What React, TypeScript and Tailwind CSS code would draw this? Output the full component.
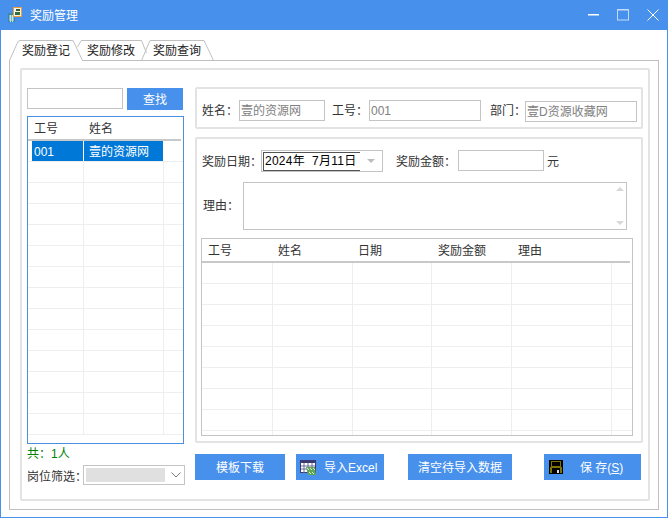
import React from "react";

const Field = ({ w, text, className = "" }: { w: string; text?: string; className?: string }) => (
  <div className={`${w} h-[21px] border border-[#c4c4c4] bg-white flex items-center pl-[1px] pt-[1px] text-[#808080] whitespace-nowrap ${className}`}>{text}</div>
);

const Label = ({ w, text, className = "" }: { w: string; text: string; className?: string }) => (
  <div className={`${w} h-[21px] flex items-center pt-[1px] text-[#333333] shrink-0 whitespace-nowrap ${className}`}>{text}</div>
);

function TitleIcon() {
  return (
    <svg width="16" height="16" viewBox="0 0 16 16" className="shrink-0">
      <rect x="0" y="6" width="7" height="9" fill="#3d8a9e" />
      <path d="M1 9h5M1 11h5M1 13h5M2.500 8v7M4.500 8v7" stroke="#bfe3ea" strokeWidth="1" />
      <rect x="5.500" y="0.500" width="8" height="9" fill="#f4f4ea" stroke="#f09a3e" />
      <rect x="8" y="2" width="4" height="2" fill="#3a5a3a" />
      <rect x="7" y="5" width="5" height="3" fill="#30703c" />
    </svg>
  );
}

function ExcelIcon() {
  return (
    <svg width="17" height="15" viewBox="0 0 17 15" className="shrink-0">
      <rect x="0.500" y="0.500" width="15" height="12" fill="#ffffff" stroke="#3b3b73" />
      <rect x="1" y="1" width="14" height="2" fill="#3b3b73" />
      <path d="M1 6h14M1 9h14M4 3v10M8 3v10M12 3v10" stroke="#6a6a9a" strokeWidth="1" />
      <path d="M6 7h9l1 8H8z" fill="#5fa55a" />
      <path d="M7 8l2 2M10 8l2 2M13 8l2 2M9 12l2 2M12 12l2 2" stroke="#d6ecd0" strokeWidth="1" />
    </svg>
  );
}

function SaveIcon() {
  return (
    <svg width="14" height="14" viewBox="0 0 14 14" className="shrink-0">
      <rect width="14" height="14" fill="#000000" />
      <rect x="2" y="1" width="10" height="6" fill="#7d7500" />
      <rect x="3" y="2" width="8" height="4" fill="#000000" />
      <rect x="1" y="7" width="12" height="1" fill="#7d7500" />
      <rect x="1" y="8" width="2" height="5" fill="#7d7500" />
      <rect x="11" y="8" width="2" height="5" fill="#7d7500" />
      <rect x="8" y="10" width="2" height="3" fill="#dddddd" />
    </svg>
  );
}

const rightCols = ["w-[71px]", "w-[80px]", "w-[80px]", "w-[80px]", "w-[100px]", "w-[20px]"];

export default function App() {
  const leftRows = Array.from({ length: 14 });
  const rightRows = Array.from({ length: 9 });
  return (
    <div className="w-[668px] h-[518px] overflow-hidden flex flex-col bg-white text-[12px] font-['Liberation_Sans','Noto_Sans_CJK_SC',sans-serif]">
      {/* title bar */}
      <div className="h-[30px] bg-[#4790ec] flex items-center pl-[8px] text-white shrink-0">
        <TitleIcon />
        <span className="ml-[6px] pt-[2px]">奖励管理</span>
        <div className="ml-auto flex items-center pr-[9px]">
          <svg width="11" height="2" viewBox="0 0 11 2"><rect width="11" height="1.500" fill="#ffffff" /></svg>
          <svg width="12" height="12" viewBox="0 0 12 12" className="ml-[18px]"><rect x="0.500" y="0.500" width="11" height="10.500" fill="none" stroke="#c3dbf8" /><rect x="0" y="0" width="12" height="1.500" fill="#c3dbf8" /></svg>
          <svg width="12" height="12" viewBox="0 0 12 12" className="ml-[18px]"><path d="M0.500 0.500L11.500 11.500M11.500 0.500L0.500 11.500" stroke="#ffffff" strokeWidth="1" fill="none" /></svg>
        </div>
      </div>

      {/* window body */}
      <div className="flex-1 border-x border-b border-[#4790ec] pl-[8px] pr-[9px] pt-[10px] flex flex-col min-h-0">
        {/* tabs */}
        <div className="relative h-[20px] shrink-0 flex items-center pl-[13px] pt-[2px] text-[#222222] z-10">
          <svg width="210" height="21" viewBox="0 0 210 21" className="absolute left-0 top-0 -z-10">
            <path d="M72 1L68.500 7M72 0.500H132.500L137.500 13" fill="none" stroke="#c0c0c0" />
            <path d="M132.500 20.500L141 0.500H195L204.500 20.500" fill="none" stroke="#c0c0c0" />
            <path d="M73.500 20.500L64 0.500H11L9 1.500L0.500 20.500" fill="#ffffff" stroke="#c0c0c0" />
            <path d="M1 21H73" stroke="#ffffff" strokeWidth="2" />
          </svg>
          <span className="w-[48px]">奖励登记</span>
          <span className="w-[48px] ml-[17px]">奖励修改</span>
          <span className="w-[48px] ml-[18px]">奖励查询</span>
        </div>

        {/* tab pane */}
        <div className="w-[650px] h-[450px] border border-[#c0c0c0] pl-[10px] pt-[7px]">
          {/* outer group */}
          <div className="w-[630px] h-[433px] border-2 border-[#e3e3e3] rounded-[2px] pl-[5px] flex">
            {/* left column */}
            <div className="w-[158px] shrink-0 pt-[18px] flex flex-col">
              <div className="flex items-start">
                <div className="w-[96px] h-[21px] border border-[#c4c4c4]" />
                <button className="w-[56px] h-[22px] ml-[4px] pt-[1px] bg-[#4790ec] text-white flex items-center justify-center">查找</button>
              </div>
              <div className="w-[157px] h-[328px] mt-[6px] border border-[#4a8fe0] overflow-hidden">
                <div className="h-[22px] flex items-center pt-[2px] text-[#333333]">
                  <span className="w-[61px] pl-[6px]">工号</span>
                  <span>姓名</span>
                </div>
                <div className="w-[153px] h-[2px] bg-[#c8c8c8]" />
                {leftRows.map((_, i) => (
                  <div key={i} className="h-[21px] flex border-b border-[#eeeeee]">
                    <div className="w-[4px] shrink-0" />
                    <div className={`w-[52px] border-r pl-[2px] pt-[1px] flex items-center ${i === 0 ? "bg-[#0078d7] text-white border-white" : "border-[#eeeeee]"}`}>
                      {i === 0 ? "001" : ""}
                    </div>
                    <div className={`w-[80px] border-r pl-[5px] pt-[1px] flex items-center ${i === 0 ? "bg-[#0078d7] text-white border-white" : "border-[#eeeeee]"}`}>
                      {i === 0 ? "壹的资源网" : ""}
                    </div>
                  </div>
                ))}
              </div>
              <div className="h-[18px] flex items-center pt-[2px] text-[#008000]">共：1人</div>
              <div className="flex items-center mt-[2px]">
                <span className="w-[56px] pt-[4px] text-[#333333] whitespace-nowrap">岗位筛选：</span>
                <div className="w-[102px] h-[20px] border border-[#c4c4c4] flex items-center pl-[2px]">
                  <div className="w-[79px] h-[14px] bg-[#e0e0e0]" />
                  <svg width="10" height="6" viewBox="0 0 10 6" className="ml-[6px]"><path d="M0.500 0.500L5 5L9.500 0.500" fill="none" stroke="#777777" /></svg>
                </div>
              </div>
            </div>

            {/* right column */}
            <div className="w-[448px] ml-[10px] pt-[17px] flex flex-col">
              <div className="h-[42px] border-2 border-[#e3e3e3] rounded-[2px] pl-[5px] pt-[11px] flex items-start">
                <Label w="w-[37px]" text="姓名：" />
                <Field w="w-[86px]" text="壹的资源网" />
                <Label w="w-[37px]" text="工号：" className="ml-[7px]" />
                <Field w="w-[112px]" text="001" />
                <Label w="w-[35px]" text="部门：" className="ml-[9px]" />
                <Field w="w-[112px]" text="壹D资源收藏网" className="mt-[1px]" />
              </div>

              <div className="h-[306px] mt-[8px] border-2 border-[#e3e3e3] rounded-[2px] pt-[11px] flex flex-col">
                <div className="flex items-start pl-[5px]">
                  <Label w="w-[59px]" text="奖励日期：" className="h-[22px]" />
                  <div className="w-[122px] h-[22px] border border-[#c4c4c4] flex items-center pl-[1px]">
                    <div className="w-[97px] h-[19px] border-l border-y border-[#555555] flex items-center pl-[1px] text-black whitespace-pre tracking-[0.25px]">2024年  7月11日</div>
                    <svg width="8" height="4" viewBox="0 0 8 4" className="ml-[7px]"><path d="M0 0H8L4 4Z" fill="#bdbdbd" /></svg>
                  </div>
                  <Label w="w-[62px]" text="奖励金额：" className="ml-[13px] h-[22px]" />
                  <Field w="w-[86px]" />
                  <Label w="w-[12px]" text="元" className="ml-[3px] h-[22px]" />
                </div>

                <div className="flex items-center mt-[10px] pl-[6px]">
                  <span className="w-[40px] text-[#333333] whitespace-nowrap">理由：</span>
                  <div className="w-[384px] h-[48px] border border-[#c4c4c4] flex flex-col items-end justify-between py-[4px] pr-[1px]">
                    <svg width="8" height="4" viewBox="0 0 8 4" className="mr-[1px]"><path d="M0 4H8L4 0Z" fill="#d8d8d8" /></svg>
                    <svg width="8" height="4" viewBox="0 0 8 4" className="mr-[1px]"><path d="M0 0H8L4 4Z" fill="#d8d8d8" /></svg>
                  </div>
                </div>

                <div className="w-[432px] h-[198px] mt-[8px] ml-[4px] border border-[#c4c4c4] overflow-hidden">
                  <div className="h-[22px] flex items-center pt-[2px] text-[#333333]">
                    <span className="w-[70px] pl-[6px]">工号</span>
                    <span className="w-[80px] pl-[6px]">姓名</span>
                    <span className="w-[80px] pl-[6px]">日期</span>
                    <span className="w-[80px] pl-[6px]">奖励金额</span>
                    <span className="w-[100px] pl-[6px]">理由</span>
                  </div>
                  <div className="w-[428px] h-[2px] bg-[#c8c8c8]" />
                  {rightRows.map((_, i) => (
                    <div key={i} className="h-[21px] flex border-b border-[#eeeeee]">
                      {rightCols.map((c, j) => (
                        <div key={j} className={`${c} ${j < 5 ? "border-r border-[#eeeeee]" : ""}`} />
                      ))}
                    </div>
                  ))}
                </div>
              </div>

              <div className="flex mt-[11px] text-white">
                <button className="w-[90px] h-[26px] pt-[1px] bg-[#4790ec] flex items-center justify-center">模板下载</button>
                <button className="w-[88px] h-[26px] ml-[11px] bg-[#4790ec] flex items-center pl-[4px]">
                  <ExcelIcon />
                  <span className="ml-[7px] pt-[1px]">导入Excel</span>
                </button>
                <button className="w-[104px] h-[26px] ml-[24px] pt-[1px] bg-[#4790ec] flex items-center justify-center">清空待导入数据</button>
                <button className="w-[97px] h-[26px] ml-[32px] bg-[#4790ec] flex items-center pl-[5px]">
                  <SaveIcon />
                  <span className="ml-[17px] pt-[1px] whitespace-pre">保 存(<span className="underline">S</span>)</span>
                </button>
              </div>
            </div>
          </div>
        </div>
      </div>
    </div>
  );
}
